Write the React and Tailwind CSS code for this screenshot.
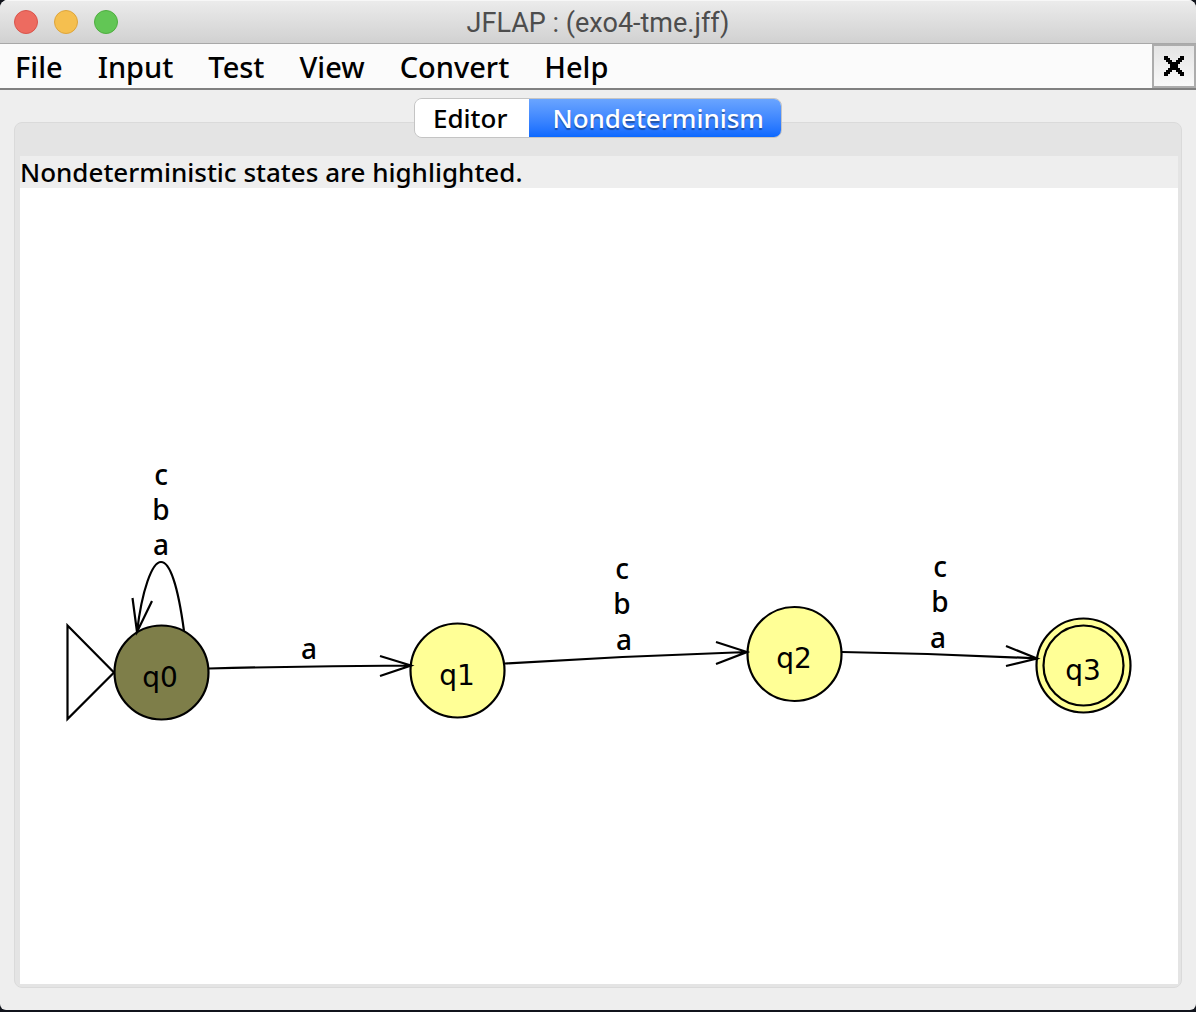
const menus = ["File", "Input", "Test", "View", "Convert", "Help"];

const lights = [
  { name: "Close", color: "bg-[#ed6b60] border-[#d9544b]" },
  { name: "Minimize", color: "bg-[#f5bf4f] border-[#dea53b]" },
  { name: "Zoom", color: "bg-[#62c655] border-[#4fae40]" },
];

const states = [
  { id: "q0", x: 161.5, y: 672.5, fill: "#7e7e49", tx: 160, ty: 687 },
  { id: "q1", x: 457.5, y: 670.5, fill: "#ffff96", tx: 457, ty: 685 },
  { id: "q2", x: 794.5, y: 654, fill: "#ffff96", tx: 794, ty: 668 },
  { id: "q3", x: 1083.5, y: 665.5, fill: "#ffff96", tx: 1083, ty: 680, final: true },
];

const edges = [
  // self loop on q0
  "M184 631 C178 586 170 562 161 562 C152 562 142 590 137 632 M132.500 598 L137 632 L152 601",
  "M209 668.500 Q310 666 411 665.500 M380 656 L411 665.500 L380 676",
  "M505 663.500 Q626 656 747 652 M716 642 L747 652 L716 664",
  "M842 652 Q940 653.500 1037 658.500 M1006 646 L1037 658.500 L1006 666",
];

const labels = [
  { t: "c", x: 161, y: 485 },
  { t: "b", x: 161, y: 520 },
  { t: "a", x: 161, y: 555 },
  { t: "a", x: 309, y: 659 },
  { t: "c", x: 622, y: 579 },
  { t: "b", x: 622, y: 614 },
  { t: "a", x: 624, y: 650 },
  { t: "c", x: 940, y: 577 },
  { t: "b", x: 940, y: 612 },
  { t: "a", x: 938, y: 648 },
];

function TitleBar() {
  return (
    <header className="grid h-11 grid-cols-[1fr_auto_1fr] items-center border-b border-[#a8a8a8] bg-linear-to-b from-[#ececec] to-[#d1d1d1] px-3.5 shadow-[inset_0_1px_0_#f7f7f7]">
      <div className="flex gap-4">
        {lights.map((l) => (
          <button key={l.name} aria-label={l.name} className={`size-6 rounded-full border ${l.color}`} />
        ))}
      </div>
      <h1 className="pt-0.5 font-[Roboto,sans-serif] text-[27px] leading-8 text-[#4d4d4d]">JFLAP : (exo4-tme.jff)</h1>
    </header>
  );
}

function MenuBar() {
  return (
    <div className="flex h-[46px] border-b-2 border-[#808080] bg-[#fbfbfb]">
      <nav className="flex flex-1 items-center gap-[35px] pt-0.5 pl-[15px] text-[29px] leading-9 font-medium">
        {menus.map((m) => (
          <button key={m}>{m}</button>
        ))}
      </nav>
      <button
        aria-label="Close tab"
        className="flex w-11 items-center justify-center border-2 border-[#acacac] bg-linear-to-b from-[#e4e4e4] to-[#f8f8f8]"
      >
        <svg width="20" height="20" viewBox="0 0 10 10" shapeRendering="crispEdges">
          <path d="M0 0h2v1h1v1h1v1h2v-1h1v-1h1v-1h2v2h-1v1h-1v1h-1v2h1v1h1v1h1v2h-2v-1h-1v-1h-1v-1h-2v1h-1v1h-1v1h-2v-2h1v-1h1v-1h1v-2h-1v-1h-1v-1h-1z" />
        </svg>
      </button>
    </div>
  );
}

function Automaton() {
  return (
    <svg
      className="block w-full font-['DejaVu_Sans',sans-serif] text-[28px]"
      viewBox="20 188 1158 796"
      preserveAspectRatio="xMinYMin meet"
      role="img"
      aria-label="Automaton with states q0 to q3"
    >
      <g fill="none" stroke="#000" strokeWidth="2.2">
        <path d="M67.500 625.500 L114 672.500 L67.500 719 Z" />
        {states.map((s) => (
          <g key={s.id}>
            <circle cx={s.x} cy={s.y} r="47" fill={s.fill} />
            {s.final && <circle cx={s.x} cy={s.y} r="40" />}
          </g>
        ))}
        {edges.map((d) => (
          <path key={d} d={d} />
        ))}
      </g>
      <g textAnchor="middle">
        {states.map((s) => (
          <text key={s.id} x={s.tx} y={s.ty}>{s.id}</text>
        ))}
        {labels.map((l, i) => (
          <text key={i} x={l.x} y={l.y} className="font-['Noto_Sans',sans-serif] text-[28px] font-medium">{l.t}</text>
        ))}
      </g>
    </svg>
  );
}

export default function App() {
  return (
    <div className="min-h-screen bg-[#11141c] pb-0.5 font-['Noto_Sans',sans-serif] text-black">
      <div className="flex min-h-[calc(100vh-2px)] flex-col overflow-hidden rounded-t-lg rounded-b-md bg-[#eeeeee]">
        <TitleBar />
        <MenuBar />
        <main className="flex flex-1 flex-col px-3.5 pt-2 pb-[22px]">
          <div role="tablist" className="z-10 -mb-4 flex h-10 self-center overflow-hidden rounded-lg border border-[#c4c4c4] text-[26px] leading-9 font-medium">
            <button role="tab" aria-selected="false" className="bg-white pr-[22px] pl-[18px]">Editor</button>
            <button
              role="tab"
              aria-selected="true"
              className="-my-px -mr-px bg-linear-to-b from-[#6ca6ff] to-[#0567ff] pr-[18px] pl-[23px] text-white text-shadow-[0_2px_1px_rgb(0_0_0/0.35)]"
            >
              Nondeterminism
            </button>
          </div>
          <section className="flex flex-1 flex-col rounded-lg border border-[#dadada] bg-[#e4e4e4] px-[5px] pt-[33px] pr-[3px] pb-[3px]">
            <p className="h-8 bg-[#eeeeee] text-[26px] leading-8 font-medium">Nondeterministic states are highlighted.</p>
            <div className="flex-1 bg-white">
              <Automaton />
            </div>
          </section>
        </main>
      </div>
    </div>
  );
}
